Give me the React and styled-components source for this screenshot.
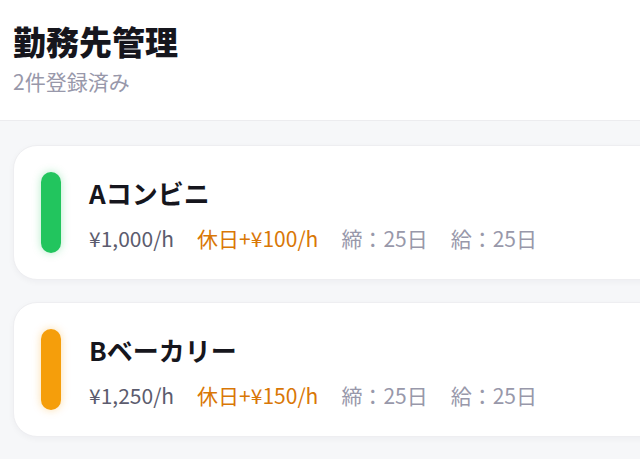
import React from "react";
import styled, { createGlobalStyle } from "styled-components";

const GlobalStyle = createGlobalStyle`
  html, body {
    margin: 0;
    padding: 0;
    background: #f6f7f9;
    overflow: hidden;
  }
  body {
    font-family: "Noto Sans CJK JP", "Noto Sans", sans-serif;
  }
`;

const Page = styled.div`
  width: 640px;
  height: 459px;
  overflow: hidden;
  background: #f6f7f9;
`;

const Header = styled.header`
  background: #ffffff;
  border-bottom: 1px solid #ececef;
  padding: 18px 13px 0;
  height: 102px;
`;

const Title = styled.h1`
  margin: 0;
  font-size: 33px;
  font-weight: 800;
  line-height: 46px;
  color: #16161d;
`;

const Sub = styled.div`
  margin-top: 2px;
  font-size: 21px;
  line-height: 30px;
  color: #9898aa;
`;

const List = styled.div`
  display: flex;
  flex-direction: column;
  gap: 22px;
  padding: 24px 0 0 13px;
`;

const Card = styled.div`
  width: 720px;
  box-sizing: border-box;
  display: flex;
  align-items: center;
  gap: 28px;
  padding: 26px 27px;
  background: #ffffff;
  border: 1px solid #eeeef1;
  border-radius: 24px;
  box-shadow: 0 2px 6px rgba(20, 20, 40, 0.04);
`;

const Bar = styled.div`
  width: 20px;
  height: 81px;
  border-radius: 10px;
  background: ${(p) => p.$color};
  box-shadow: 0 0 8px ${(p) => p.$glow};
  flex-shrink: 0;
`;

const Info = styled.div`
  display: flex;
  flex-direction: column;
  gap: 11px;
`;

const Name = styled.div`
  font-size: 26px;
  font-weight: 700;
  line-height: 40px;
  color: #16161d;
`;

const Meta = styled.div`
  display: flex;
  gap: 23px;
  font-size: 21px;
  line-height: 28px;
`;

const Item = styled.span`
  color: ${(p) =>
    p.$tone === "holiday" ? "#d97706" : p.$tone === "muted" ? "#9898aa" : "#5c5c6e"};
`;

const jobs = [
  { name: "Aコンビニ", wage: "1,000", bonus: "100", close: 25, pay: 25, color: "#22c55e", glow: "rgba(34,197,94,0.35)" },
  { name: "Bベーカリー", wage: "1,250", bonus: "150", close: 25, pay: 25, color: "#f59e0b", glow: "rgba(245,158,11,0.35)" },
];

export default function App() {
  return (
    <Page>
      <GlobalStyle />
      <Header>
        <Title>勤務先管理</Title>
        <Sub>{jobs.length}件登録済み</Sub>
      </Header>
      <List>
        {jobs.map((j) => (
          <Card key={j.name}>
            <Bar $color={j.color} $glow={j.glow} />
            <Info>
              <Name>{j.name}</Name>
              <Meta>
                <Item>¥{j.wage}/h</Item>
                <Item $tone="holiday">休日+¥{j.bonus}/h</Item>
                <Item $tone="muted">締：{j.close}日</Item>
                <Item $tone="muted">給：{j.pay}日</Item>
              </Meta>
            </Info>
          </Card>
        ))}
      </List>
    </Page>
  );
}
